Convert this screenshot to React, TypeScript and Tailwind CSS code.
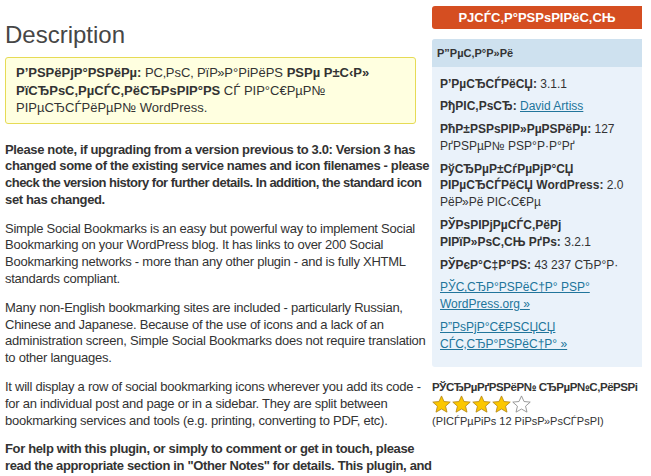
import React from 'react';

const Star = ({ filled }: { filled: boolean }) => (
  <svg width="19" height="18" viewBox="0 0 20 19" className="shrink-0">
    <polygon
      points="10,1 12.7,6.9 19.2,7.5 14.3,11.8 15.8,18.1 10,14.8 4.2,18.1 5.7,11.8 0.8,7.5 7.3,6.9"
      fill={filled ? '#fcc700' : '#ffffff'}
      stroke={filled ? '#b58a1c' : '#8a8a8a'}
      strokeWidth="0.9"
      strokeLinejoin="round"
    />
  </svg>
);

const Meta = ({ label, children }: { label: string; children: React.ReactNode }) => (
  <li className="mb-[6px]">
    <strong className="font-bold">{label}</strong> {children}
  </li>
);

// lines broken where the original page breaks them
const Para = ({ lines, bold = false, tight }: { lines: string[]; bold?: boolean; tight?: number }) => (
  <p className={bold ? 'font-bold mb-[12px] tracking-[-0.35px]' : 'mb-[12px] tracking-[-0.25px]'}>
    {lines.map((l, i) => (
      <span key={i} className={i === tight ? 'block whitespace-nowrap tracking-[-0.52px]' : 'block whitespace-nowrap'}>
        {l}
      </span>
    ))}
  </p>
);

const App = () => {
  return (
    <div className="w-[651px] h-[476px] overflow-hidden bg-white flex font-['Liberation_Sans',Arial,sans-serif] text-[#333]">
      <main className="w-[416px] ml-[5px] shrink-0 pt-[20px] text-[13px] leading-[16.8px]">
        <h2 className="text-[24px] leading-[30px] text-[#464646] mb-[7px]">Description</h2>

        <div className="border border-[#e6db55] bg-[#ffffe0] rounded-[3px] px-[10px] py-[6px] mr-[5px] mb-[18px] leading-[17.5px]">
          <strong>Р’РЅРёРјР°РЅРёРµ:</strong> {'Р\u00ADС‚РѕС‚'} РїР»Р°РіРёРЅ{' '}
          <strong>РЅРµ Р±С‹Р» РїСЂРѕС‚РµСЃС‚РёСЂРѕРІР°РЅ</strong> СЃ РІР°С€РµР№ РІРµСЂСЃРёРµР№ WordPress.
        </div>

        <Para
          bold
          tight={2}
          lines={[
            'Please note, if upgrading from a version previous to 3.0: Version 3 has',
            'changed some of the existing service names and icon filenames - please',
            'check the version history for further details. In addition, the standard icon',
            'set has changed.',
          ]}
        />
        <Para
          lines={[
            'Simple Social Bookmarks is an easy but powerful way to implement Social',
            'Bookmarking on your WordPress blog. It has links to over 200 Social',
            'Bookmarking networks - more than any other plugin - and is fully XHTML',
            'standards compliant.',
          ]}
        />
        <Para
          lines={[
            'Many non-English bookmarking sites are included - particularly Russian,',
            'Chinese and Japanese. Because of the use of icons and a lack of an',
            'administration screen, Simple Social Bookmarks does not require translation',
            'to other languages.',
          ]}
        />
        <Para
          lines={[
            'It will display a row of social bookmarking icons wherever you add its code -',
            'for an individual post and page or in a sidebar. They are split between',
            'bookmarking services and tools (e.g. printing, converting to PDF, etc).',
          ]}
        />
        <Para
          bold
          lines={[
            'For help with this plugin, or simply to comment or get in touch, please',
            'read the appropriate section in "Other Notes" for details. This plugin, and',
          ]}
        />
      </main>

      <aside className="ml-[11px] w-[210px] shrink-0 pt-[6px]">
        <a
          href="#"
          className="flex items-center justify-center h-[23px] bg-[#d54e21] text-white text-[13px] font-bold rounded-l-[3px]"
        >
          РЈСЃС‚Р°РЅРѕРІРёС‚СЊ
        </a>

        <div className="mt-[10px] bg-[#eaf2fa] rounded-l-[3px] overflow-hidden">
          <h4 className="h-[28px] flex items-center px-[5px] bg-[#cee1ef] text-[11px] font-bold text-[#333]">
            Р”РµС‚Р°Р»Рё
          </h4>
          <ul className="px-[8px] pt-[8.5px] pb-[14.5px] text-[12px] leading-[16.8px]">
            <Meta label="Р’РµСЂСЃРёСЏ:">3.1.1</Meta>
            <Meta label="РђРІС‚РѕСЂ:">
              <a href="#" className="text-[#21759b] underline">David Artiss</a>
            </Meta>
            <Meta label="РћР±РЅРѕРІР»РµРЅРёРµ:">127 РґРЅРµР№ РЅР°Р·Р°Рґ</Meta>
            <Meta label="РўСЂРµР±СѓРµРјР°СЏ РІРµСЂСЃРёСЏ WordPress:">2.0 РёР»Рё РІС‹С€Рµ</Meta>
            <Meta label="РЎРѕРІРјРµСЃС‚РёРј РІРїР»РѕС‚СЊ РґРѕ:">3.2.1</Meta>
            <Meta label="РЎРєР°С‡Р°РЅ:">43 237 СЂР°Р·</Meta>
            <li className="mb-[6px]">
              <a href="#" className="text-[#21759b] underline">РЎС‚СЂР°РЅРёС†Р° РЅР° WordPress.org »</a>
            </li>
            <li>
              <a href="#" className="text-[#21759b] underline">Р”РѕРјР°С€РЅСЏСЏ СЃС‚СЂР°РЅРёС†Р° »</a>
            </li>
          </ul>
        </div>

        <h4 className="mt-[12px] text-[11.5px] font-bold leading-[16px] text-[#333] whitespace-nowrap tracking-[-0.45px]">
          РЎСЂРµРґРЅРёР№ СЂРµР№С‚РёРЅРі
        </h4>
        <div className="flex gap-[1px]">
          <Star filled />
          <Star filled />
          <Star filled />
          <Star filled />
          <Star filled={false} />
        </div>
        <p className="text-[11px] leading-[14px] mt-[1px] text-[#333]">(РІСЃРµРіРѕ 12 РіРѕР»РѕСЃРѕРІ)</p>
      </aside>
    </div>
  );
};

export default App;
